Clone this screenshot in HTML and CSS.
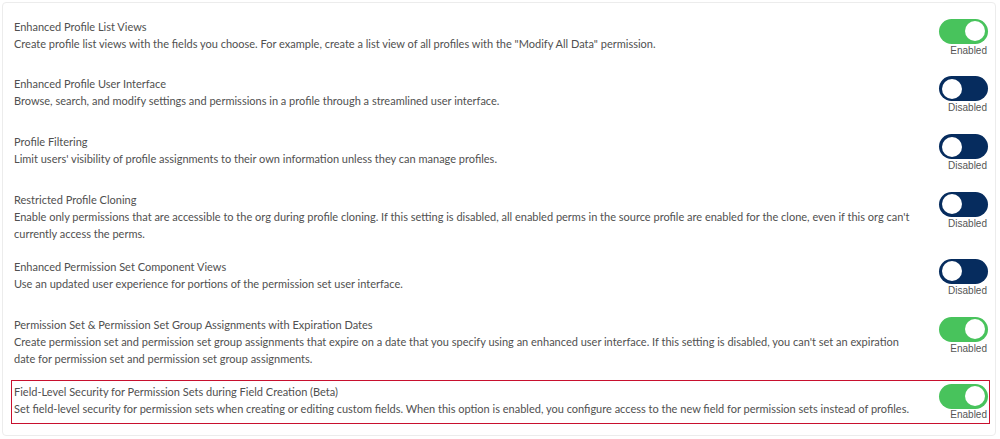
FILE: index.html
```html
<!DOCTYPE html>
<html lang="en">
<head>
  <meta charset="UTF-8">
  <meta name="viewport" content="width=device-width, initial-scale=1.0">
  <title>Profile and permission settings</title>
  <link rel="stylesheet" href="styles.css">
</head>
<body>
  <div class="card">

    <div class="setting">
      <div class="info">
        <div class="name">Enhanced Profile List Views</div>
        <div class="desc">Create profile list views with the fields you choose. For example, create a list view of all profiles with the "Modify All Data" permission.</div>
      </div>
      <div class="toggle">
        <span class="switch on"><span class="knob"></span></span>
        <span class="state">Enabled</span>
      </div>
    </div>

    <div class="setting">
      <div class="info">
        <div class="name">Enhanced Profile User Interface</div>
        <div class="desc">Browse, search, and modify settings and permissions in a profile through a streamlined user interface.</div>
      </div>
      <div class="toggle">
        <span class="switch off"><span class="knob"></span></span>
        <span class="state">Disabled</span>
      </div>
    </div>

    <div class="setting">
      <div class="info">
        <div class="name">Profile Filtering</div>
        <div class="desc">Limit users' visibility of profile assignments to their own information unless they can manage profiles.</div>
      </div>
      <div class="toggle">
        <span class="switch off"><span class="knob"></span></span>
        <span class="state">Disabled</span>
      </div>
    </div>

    <div class="setting">
      <div class="info">
        <div class="name">Restricted Profile Cloning</div>
        <div class="desc">Enable only permissions that are accessible to the org during profile cloning. If this setting is disabled, all enabled perms in the source profile are enabled for the clone, even if this org can't currently access the perms.</div>
      </div>
      <div class="toggle">
        <span class="switch off"><span class="knob"></span></span>
        <span class="state">Disabled</span>
      </div>
    </div>

    <div class="setting">
      <div class="info">
        <div class="name">Enhanced Permission Set Component Views</div>
        <div class="desc">Use an updated user experience for portions of the permission set user interface.</div>
      </div>
      <div class="toggle">
        <span class="switch off"><span class="knob"></span></span>
        <span class="state">Disabled</span>
      </div>
    </div>

    <div class="setting">
      <div class="info">
        <div class="name">Permission Set &amp; Permission Set Group Assignments with Expiration Dates</div>
        <div class="desc">Create permission set and permission set group assignments that expire on a date that you specify using an enhanced user interface. If this setting is disabled, you can't set an expiration date for permission set and permission set group assignments.</div>
      </div>
      <div class="toggle">
        <span class="switch on"><span class="knob"></span></span>
        <span class="state">Enabled</span>
      </div>
    </div>

    <div class="setting flagged">
      <div class="info">
        <div class="name">Field-Level Security for Permission Sets during Field Creation (Beta)</div>
        <div class="desc">Set field-level security for permission sets when creating or editing custom fields. When this option is enabled, you configure access to the new field for permission sets instead of profiles.</div>
      </div>
      <div class="toggle">
        <span class="switch on"><span class="knob"></span></span>
        <span class="state">Enabled</span>
      </div>
    </div>

  </div>
</body>
</html>
```

FILE: styles.css
```css
body {
  margin: 0;
  background: #fff;
  font-family: Lato, "Open Sans", sans-serif;
  font-size: 11px;
  color: #505050;
}
.card {
  margin: 2px 4px 0 2px;
  padding: 11.5px 5px 11px 8px;
  border: 1px solid #ececec;
  border-radius: 4px;
}
.setting {
  display: flex;
  align-items: flex-start;
  gap: 25px;
  min-height: 41.75px;
  padding: 2px 1px 2px 2px;
  margin-bottom: 10px;
  border: 1px solid transparent;
}
.setting:last-child {
  margin-bottom: 0;
}
.info {
  flex: 1;
  line-height: 17px;
}
.toggle {
  width: 49px;
  padding-top: 1px;
  display: flex;
  flex-direction: column;
  align-items: flex-end;
}
.switch {
  display: block;
  position: relative;
  width: 49px;
  height: 25px;
  border-radius: 13px;
}
.switch.on {
  background: #48c35c;
}
.switch.off {
  background: #062c5e;
}
.knob {
  position: absolute;
  top: 2.5px;
  width: 20px;
  height: 20px;
  border-radius: 50%;
  background: #fff;
}
.on .knob {
  right: 3px;
}
.off .knob {
  left: 3px;
}
.state {
  font-family: "Liberation Sans", Arial, sans-serif;
  font-size: 10px;
  line-height: 14px;
  color: #555;
  margin-right: 1px;
}
.flagged {
  min-height: 36px;
  border-color: #c8102e;
}
.flagged .state {
  line-height: 12px;
}
```
